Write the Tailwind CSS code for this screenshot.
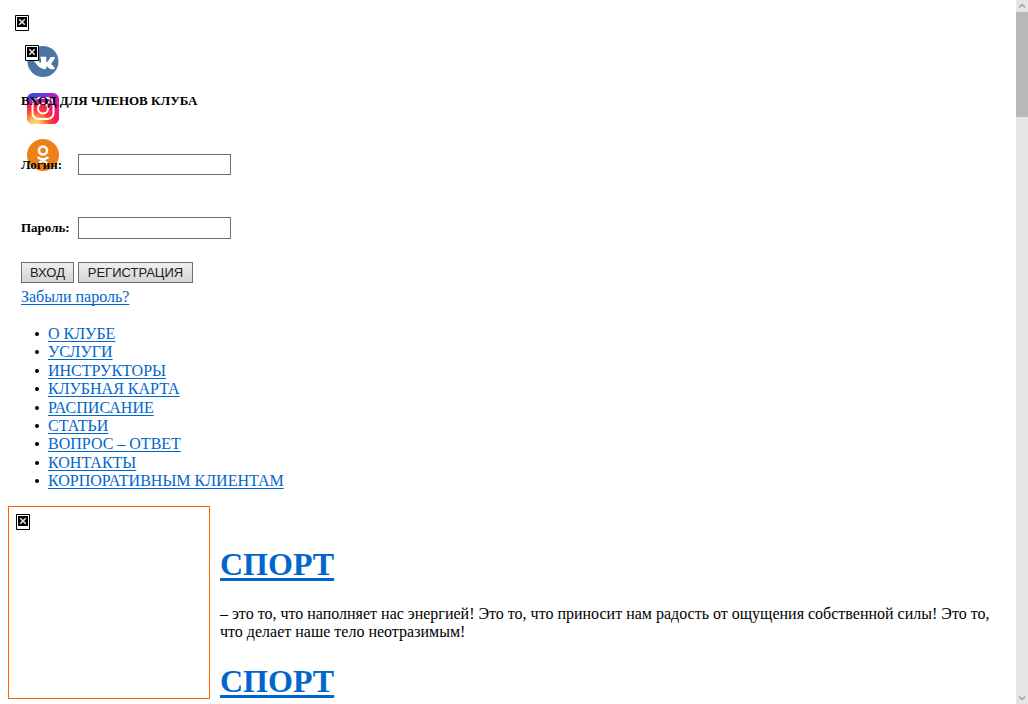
<!DOCTYPE html>
<html lang="ru">
<head>
<meta charset="utf-8">
<title>Спортивный клуб</title>
<script src="https://cdn.jsdelivr.net/npm/@tailwindcss/browser@4"></script>
</head>
<body class="flex h-screen overflow-hidden bg-white font-['Liberation_Serif',serif] text-base leading-[18px] text-black">
<svg class="hidden" aria-hidden="true">
  <symbol id="missing" viewBox="0 0 14 16">
    <path fill="#fff" d="M0 0h14v16H0z"/>
    <path fill="none" stroke="#000" d="M.5.5h13v15H.5z"/>
    <path fill="#000" d="M2 2h10v10H2z"/>
    <path stroke="#e4e4e4" stroke-width="1.6" d="M4.200 4.200l5.600 5.600M9.800 4.200l-5.600 5.600"/>
  </symbol>
</svg>

<main class="min-w-0 flex-1 overflow-hidden px-2">
  <header class="relative px-[13px] pt-[15px]">
    <nav aria-label="Социальные сети" class="absolute top-[45px] left-[18px] flex flex-col gap-[14px]">
      <a href="#" aria-label="ВКонтакте"><svg class="block size-[33px]" viewBox="0 0 33 33">
        <circle cx="17" cy="16.5" r="15.5" fill="#4c75a3"/>
        <path fill="#fff" transform="translate(0 1)" d="M6 11h4c.7 0 1 .4 1.200 1 1 2.700 2.500 4.800 3.200 4.800.4 0 .6-.3.6-1.200V13c-.1-1.200-.9-1.300-.9-1.700 0-.3.300-.5.700-.5h4.700c.6 0 .8.300.8 1v3.700c0 .4.200.6.400.6.3 0 .6-.2 1.200-.8 1.300-1.500 2.100-3.400 2.100-3.400.2-.5.500-.8 1.200-.8h2.700c1 0 1 .5.800 1.100-.4 1.500-3.200 5-3.200 5-.4.500-.4.700 0 1.200 1 1 2.700 2.500 3.200 3.700.2.700-.1 1.100-.9 1.100h-3.200c-.8 0-1.200-.4-1.800-1.100-.8-.9-1.500-1.500-2-1.500-.4 0-.5.2-.5 1v.7c0 .6-.3.900-1.600.9-3 0-6-1.800-8.200-4.900C7.500 14.500 6.200 12 6 11z"/>
      </svg></a>
      <a href="#" aria-label="Instagram"><svg class="block size-[33px]" viewBox="0 0 33 33">
        <defs>
          <linearGradient id="sky" x1=".2" y1="0" x2=".8" y2=".7"><stop offset="0" stop-color="#2c4df2"/><stop offset=".4" stop-color="#9c25d8"/><stop offset="1" stop-color="#f51475"/></linearGradient>
          <radialGradient id="sun" cx=".25" cy="1.050" r=".95"><stop offset="0" stop-color="#ffe07a"/><stop offset=".2" stop-color="#ffc65a"/><stop offset=".5" stop-color="#ff412d"/><stop offset=".75" stop-color="#fc1950" stop-opacity=".85"/><stop offset="1" stop-color="#e01cb0" stop-opacity="0"/></radialGradient>
        </defs>
        <rect x="1" y="1" width="32" height="31" rx="6" fill="url(#sky)"/>
        <rect x="1" y="1" width="32" height="31" rx="6" fill="url(#sun)"/>
        <g fill="none" stroke="#fff" stroke-width="2"><rect x="6.500" y="6" width="21" height="21" rx="6"/><circle cx="17" cy="16.500" r="5"/></g>
        <circle cx="23.300" cy="10.500" r="1.300" fill="#fff"/>
      </svg></a>
      <a href="#" aria-label="Одноклассники"><svg class="block size-[33px]" viewBox="0 0 33 33">
        <circle cx="17" cy="16" r="16" fill="#ee8019"/>
        <g fill="none" stroke="#fff" stroke-width="2.500" stroke-linecap="round"><circle cx="17" cy="11.500" r="4"/><path d="M12.500 18.700q4.500 3 9 0M17 20.700l-4.300 4.300M17 20.700l4.300 4.300"/></g>
      </svg></a>
    </nav>

    <svg class="-ml-[6px] block h-4 w-[14px]"><use href="#missing"/></svg>
    <svg class="relative mt-[14px] ml-1 block h-4 w-[14px]"><use href="#missing"/></svg>

    <form class="relative pt-8">
      <h2 class="text-[13px] leading-4 font-bold">ВХОД ДЛЯ ЧЛЕНОВ КЛУБА</h2>
      <div class="mt-[45px] flex items-center">
        <label for="login" class="w-[57px] text-[13px] font-bold">Логин:</label>
        <input id="login" type="text" class="h-[21px] w-[153px] border border-[#707070] bg-white px-1 text-[13px] outline-none">
      </div>
      <div class="mt-[42px] flex items-center">
        <label for="password" class="w-[57px] text-[13px] font-bold">Пароль:</label>
        <input id="password" type="password" class="h-[22px] w-[153px] border border-[#707070] bg-white px-1 text-[13px] outline-none">
      </div>
      <div class="mt-[23px] flex gap-1 font-['Liberation_Sans',sans-serif] text-[13px] leading-[19px] text-[#212121]">
        <button type="submit" class="w-[53px] border border-[#707070] bg-linear-to-b from-[#f0f0f0] to-[#d4d4d4] whitespace-nowrap">ВХОД</button>
        <button type="button" class="w-[115px] border border-[#707070] bg-linear-to-b from-[#f0f0f0] to-[#d4d4d4] whitespace-nowrap">РЕГИСТРАЦИЯ</button>
      </div>
      <a href="#" class="mt-[5px] block w-fit text-[#0066cc] underline decoration-1 underline-offset-2 [text-decoration-skip-ink:none]">Забыли пароль?</a>
    </form>

    <nav aria-label="Главное меню">
      <ul class="mt-[19px] flex h-[165px] flex-col justify-between pl-[14px] text-[#0066cc] decoration-1 [&_a]:underline [&_a]:underline-offset-2 [&_a]:[text-decoration-skip-ink:none] [&>li]:flex [&>li]:items-center [&>li]:gap-[9px] [&>li]:before:size-1 [&>li]:before:rounded-full [&>li]:before:bg-black">
        <li><a href="#">О КЛУБЕ</a></li>
        <li><a href="#">УСЛУГИ</a></li>
        <li><a href="#">ИНСТРУКТОРЫ</a></li>
        <li><a href="#">КЛУБНАЯ КАРТА</a></li>
        <li><a href="#">РАСПИСАНИЕ</a></li>
        <li><a href="#">СТАТЬИ</a></li>
        <li><a href="#">ВОПРОС – ОТВЕТ</a></li>
        <li><a href="#">КОНТАКТЫ</a></li>
        <li><a href="#">КОРПОРАТИВНЫМ КЛИЕНТАМ</a></li>
      </ul>
    </nav>
  </header>

  <section class="mt-4 flex items-start gap-[10px]">
    <div class="h-[193px] w-[202px] shrink-0 border border-[#ff6600] p-[7px]">
      <svg class="block h-4 w-[14px]"><use href="#missing"/></svg>
    </div>
    <div class="min-w-0 flex-1 pt-10 pr-2">
      <h1 class="text-[32px] leading-9 font-bold"><a href="#" class="text-[#0066cc] underline decoration-3 underline-offset-3">СПОРТ</a></h1>
      <p class="mt-[23px]">– это то, что наполняет нас энергией! Это то, что приносит нам радость от ощущения собственной силы! Это то, что делает наше тело неотразимым!</p>
      <h1 class="mt-[22px] text-[32px] leading-9 font-bold"><a href="#" class="text-[#0066cc] underline decoration-3 underline-offset-3">СПОРТ</a></h1>
    </div>
  </section>
</main>

<div class="flex w-3 shrink-0 flex-col bg-[#e5e5e5]" aria-hidden="true">
  <svg class="block size-3" viewBox="0 0 12 12"><path d="M3 7.500l3-3 3 3" fill="none" stroke="#a0a0a0" stroke-width="1.500"/></svg>
  <div class="h-[105px] bg-[#b8b8b8]"></div>
  <div class="flex-1"></div>
  <svg class="block size-3" viewBox="0 0 12 12"><path d="M3 4.500l3 3 3-3" fill="none" stroke="#a0a0a0" stroke-width="1.500"/></svg>
</div>
</body>
</html>
